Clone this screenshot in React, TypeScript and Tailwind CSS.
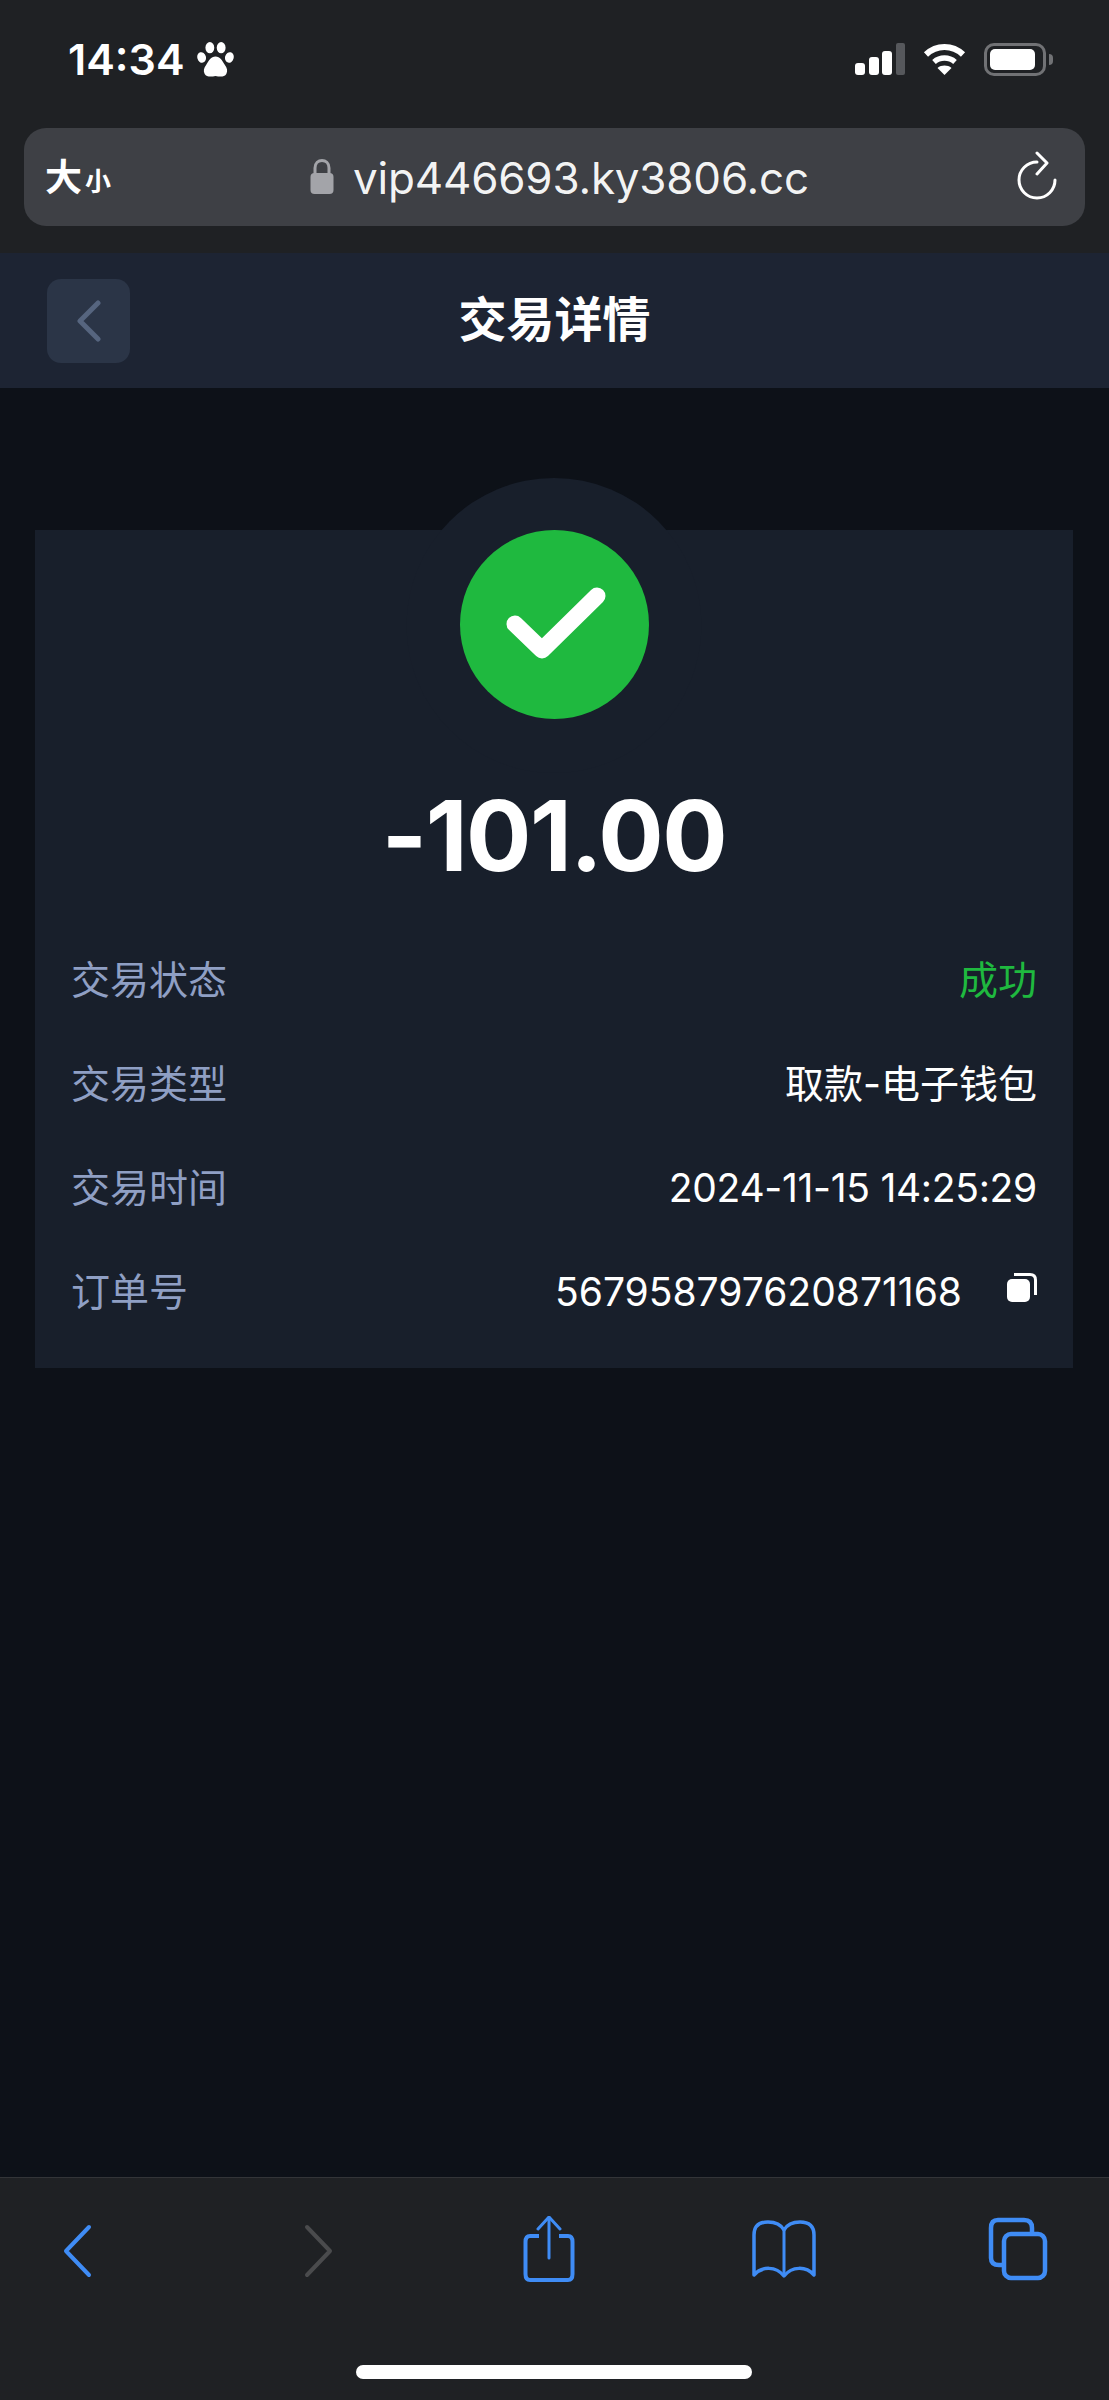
import React from 'react';

const FONT = "font-['Inter','Noto_Sans_CJK_SC',sans-serif]";

const rows = [
  { label: '交易状态', value: '成功', green: true },
  { label: '交易类型', value: '取款-电子钱包' },
  { label: '交易时间', value: '2024-11-15 14:25:29', tight: true },
];

const StatusIcons = () => (
  <div className="flex items-center">
    {/* signal */}
    <svg width="50" height="32" viewBox="0 0 50 32">
      <rect x="0" y="20" width="10" height="12" rx="3" fill="#fff" />
      <rect x="14" y="14" width="10" height="18" rx="3" fill="#fff" />
      <rect x="27" y="8" width="10" height="24" rx="3" fill="#fff" />
      <rect x="41" y="0" width="9" height="32" rx="2" fill="#56585c" />
    </svg>
    {/* wifi */}
    <svg className="ml-[18px]" width="43" height="32" viewBox="0 0 43 32" fill="none">
      <path d="M3 11.5 C13.5 1.5 29.5 1.5 40 11.5" stroke="#fff" strokeWidth="6" />
      <path d="M11 19 C17 13.8 26 13.8 32 19" stroke="#fff" strokeWidth="5.5" />
      <path d="M21.5 32 L14.5 25 C18.5 21.8 24.5 21.8 28.5 25 Z" fill="#fff" />
    </svg>
    {/* battery */}
    <div className="ml-[18px] flex items-center">
      <div className="w-[62px] h-[33px] rounded-[10px] border-[3px] border-[#717275] p-[3px]">
        <div className="w-[45px] h-full rounded-[5px] bg-white" />
      </div>
      <div className="ml-[3px] w-[4px] h-[11px] rounded-r-full bg-[#717275]" />
    </div>
  </div>
);

const Paw = () => (
  <svg className="ml-[12px]" width="37" height="35" viewBox="0 0 36 34" fill="#fff">
    <ellipse cx="4.5" cy="15" rx="4.2" ry="5.2" transform="rotate(-15 4.5 15)" />
    <ellipse cx="12.5" cy="5.5" rx="4.3" ry="5.5" />
    <ellipse cx="23.5" cy="5.5" rx="4.3" ry="5.5" />
    <ellipse cx="31.5" cy="15" rx="4.2" ry="5.2" transform="rotate(15 31.5 15)" />
    <path d="M18 14 C22.5 14 24.5 18 27 22 C29.5 25.5 30 28 28.5 31 C27 33.8 23 34 18 33 C13 34 9 33.8 7.5 31 C6 28 6.5 25.5 9 22 C11.5 18 13.5 14 18 14 Z" />
  </svg>
);

const BLUE = '#3f8cf5';

const BottomIcons = () => (
  <div className="flex items-start pl-[47px] gap-[176px]">
    <svg width="60" height="66" viewBox="0 0 60 66" fill="none">
      <path d="M42 11 L19 35 L42 59" stroke={BLUE} strokeWidth="4" strokeLinecap="round" strokeLinejoin="round" />
    </svg>
    <svg width="60" height="66" viewBox="0 0 60 66" fill="none">
      <path d="M24 11 L47 35 L24 59" stroke="#4a4b4d" strokeWidth="4" strokeLinecap="round" strokeLinejoin="round" />
    </svg>
    <svg className="-ml-[1px]" width="60" height="66" viewBox="0 0 60 66" fill="none">
      <path d="M21 20 H12 Q7.5 20 7.5 26 V58 Q7.5 64 12 64 H50 Q54.5 64 54.5 58 V26 Q54.5 20 50 20 H41" stroke={BLUE} strokeWidth="4" />
      <path d="M31 2 V42" stroke={BLUE} strokeWidth="3" strokeLinecap="round" />
      <path d="M20 13 L31 1 L42 13" stroke={BLUE} strokeWidth="3" strokeLinecap="round" strokeLinejoin="round" />
    </svg>
    <svg className="-ml-[3px]" width="66" height="66" viewBox="0 0 66 66" fill="none">
      <path d="M33 14 C29 7 23 6 17 6 C7 6 3 11 3 19 V59 C11 50 25 50 33 60 C41 50 55 50 63 59 V19 C63 11 59 6 49 6 C43 6 37 7 33 14 Z" stroke={BLUE} strokeWidth="3.5" strokeLinejoin="round" />
      <path d="M33 14 V58" stroke={BLUE} strokeWidth="3" />
    </svg>
    <svg className="-ml-[5px]" width="60" height="66" viewBox="0 0 60 66" fill="none">
      <path d="M44 16 V12 Q44 4 36 4 H10 Q3 4 3 12 V42 Q3 49 11 49 H15" stroke={BLUE} strokeWidth="4.5" />
      <rect x="16" y="18" width="41" height="44" rx="7" stroke={BLUE} strokeWidth="4.5" />
    </svg>
  </div>
);

export default function App() {
  return (
    <div className={`w-[1109px] h-[2400px] flex flex-col bg-[#0d1118] text-white overflow-hidden ${FONT}`}>
      {/* status + url bar */}
      <div className="h-[253px] bg-[#1f2124] px-[24px] shrink-0">
        <div className="h-[128px] pb-[10px] flex items-center justify-between pl-[44px] pr-[32px]">
          <div className="flex items-center">
            <span className="text-[43px] leading-none font-semibold tracking-[0px]">14:34</span>
            <Paw />
          </div>
          <StatusIcons />
        </div>
        <div className="relative h-[98px] rounded-[22px] bg-[#3e4045] flex items-center justify-between pl-[21px] pr-[27px]">
          <div className="flex items-baseline font-semibold">
            <span className="text-[37px] leading-none">大</span>
            <span className="ml-[3px] text-[26px] leading-none">小</span>
          </div>
          <div className="absolute left-[286px] top-0 h-full flex items-center">
            <svg width="24" height="36" viewBox="0 0 24 36" fill="none">
              <path d="M5 17 V9 C5 -1 19 -1 19 9 V17" stroke="#a3a4a9" strokeWidth="3" />
              <rect x="0.5" y="14" width="23" height="21" rx="4" fill="#a3a4a9" />
            </svg>
            <span className="ml-[19px] text-[44px] leading-none tracking-[-0.2px] text-white/95 pt-[2px]">vip446693.ky3806.cc</span>
          </div>
          <svg className="mb-[2px]" width="42" height="50" viewBox="0 0 42 50" fill="none">
            <path d="M21 11 A18 18 0 1 0 39 29" stroke="#fff" strokeWidth="3" strokeLinecap="round" />
            <path d="M21 2 L31 12 L21 23" stroke="#fff" strokeWidth="3" strokeLinecap="round" strokeLinejoin="round" />
          </svg>
        </div>
      </div>

      {/* page header */}
      <header className="relative h-[135px] shrink-0 bg-[#1d2433] flex items-center pl-[47px]">
        <button className="w-[83px] h-[84px] rounded-[14px] bg-[#2b3547] flex items-center justify-center">
          <svg width="28" height="42" viewBox="0 0 28 42" fill="none">
            <path d="M23 3 L5 21 L23 39" stroke="#56657f" strokeWidth="5" strokeLinecap="round" strokeLinejoin="round" />
          </svg>
        </button>
        <h1 className="absolute inset-x-0 text-center text-[48px] leading-none font-semibold pb-[2px]">交易详情</h1>
      </header>

      {/* card */}
      <main className="flex-1 px-[35px] pt-[142px]">
        <div className="relative h-[838px] bg-[#181f2b] w-[1038px] px-[36px]">
          <div className="absolute left-1/2 -top-[52px] w-[295px] h-[295px] -translate-x-1/2 rounded-full bg-[#181f2b]" />
          <div className="relative flex flex-col items-center">
            <div className="w-[189px] h-[189px] rounded-full bg-[#1fb93f] flex items-center justify-center">
              <svg className="ml-[4px]" width="100" height="76" viewBox="0 0 100 76" fill="none">
                <path d="M9 37 L36 63 L91 9" stroke="#fff" strokeWidth="17" strokeLinecap="round" strokeLinejoin="round" />
              </svg>
            </div>
            <div className="h-[208px] pt-[24px] flex items-center text-[97px] leading-none font-bold tracking-[-1.5px]">-101.00</div>
          </div>
          <div className="relative flex flex-col">
            {rows.map(r => (
              <div key={r.label} className="h-[104px] flex items-center justify-between text-[39px] leading-none">
                <span className="text-[#8f9fc4]">{r.label}</span>
                <span className={`${r.green ? 'text-[#1fb93f]' : 'text-white'} ${r.tight ? 'tracking-[-0.3px]' : ''}`}>{r.value}</span>
              </div>
            ))}
            <div className="h-[104px] flex items-center justify-between text-[39px] leading-none">
              <span className="text-[#8f9fc4]">订单号</span>
              <div className="flex items-center">
                <span>567958797620871168</span>
                <svg className="ml-[45px] mb-[6px]" width="30" height="30" viewBox="0 0 30 30" fill="none">
                  <rect x="0" y="6" width="23" height="23" rx="5" fill="#fff" />
                  <path d="M7 1.5 H23 Q28.5 1.5 28.5 7 V22" stroke="#fff" strokeWidth="3" />
                </svg>
              </div>
            </div>
          </div>
        </div>
      </main>

      {/* safari toolbar */}
      <footer className="relative h-[223px] shrink-0 bg-[#1f2124] border-t border-[#333538] pt-[38px]">
        <BottomIcons />
        <div className="absolute left-[356px] top-[187px] w-[396px] h-[14px] rounded-full bg-white" />
      </footer>
    </div>
  );
}
